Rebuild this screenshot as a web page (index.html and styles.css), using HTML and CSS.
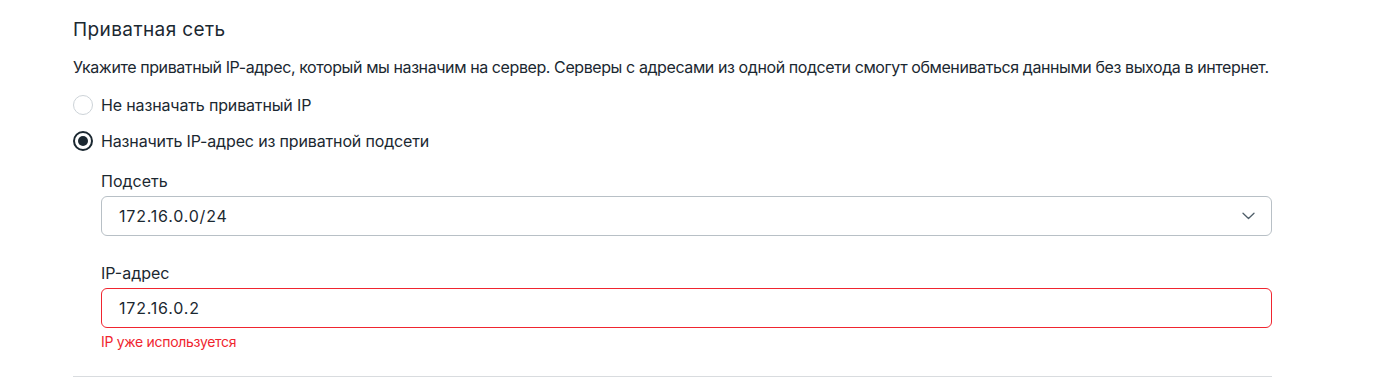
FILE: index.html
```html
<!DOCTYPE html>
<html lang="ru">
<head>
<meta charset="utf-8">
<link rel="stylesheet" href="styles.css">
</head>
<body>
<section class="section">
  <h2 class="title">Приватная сеть</h2>
  <p class="desc">Укажите приватный IP-адрес, который мы назначим на сервер. Серверы с адресами из одной подсети смогут обмениваться данными без выхода в интернет.</p>
  <div class="radios">
    <label class="radio"><span class="circle"></span><span>Не назначать приватный IP</span></label>
    <label class="radio"><span class="circle checked"></span><span>Назначить IP-адрес из приватной подсети</span></label>
  </div>
  <div class="fields">
    <div class="field">
      <div class="label">Подсеть</div>
      <div class="control select">
        <span class="value">172.16.0.0/24</span>
        <svg class="chev" width="13" height="8" viewBox="0 0 13 8"><path d="M1 1.2l5.5 5.3 5.5-5.3" fill="none" stroke="#4f5e69" stroke-width="1.3" stroke-linecap="round" stroke-linejoin="round"/></svg>
      </div>
    </div>
    <div class="field second">
      <div class="label">IP-адрес</div>
      <div class="control error"><span class="value">172.16.0.2</span></div>
      <div class="err">IP уже используется</div>
    </div>
  </div>
  <div class="divider"></div>
</section>
</body>
</html>
```
FILE: styles.css
```css
* { box-sizing: border-box; }
html, body { margin: 0; padding: 0; background: #fff; }
body { font-family: Inter, "Noto Sans", sans-serif; color: #1b2831; }
.section { margin-left: 73px; width: 1199px; padding-top: 18px; }
.title { margin: 0; font-size: 19px; line-height: 24px; font-weight: 400; letter-spacing: 0.4px; }
.desc { margin: 13px 0 0; font-size: 16px; line-height: 24px; letter-spacing: -0.41px; white-space: nowrap; }
.radios { margin-top: 14px; display: flex; flex-direction: column; gap: 12px; }
.radio { display: flex; align-items: center; gap: 8px; font-size: 16px; line-height: 24px; letter-spacing: -0.15px; }
.circle { width: 20px; height: 20px; border-radius: 50%; border: 1px solid #cdd3d8; display: flex; align-items: center; justify-content: center; }
.circle.checked { border: 2px solid #1b2831; }
.circle.checked::after { content: ""; width: 10px; height: 10px; border-radius: 50%; background: #1b2831; }
.fields { margin-left: 28px; margin-top: 17px; }
.field.second { margin-top: 26px; }
.label { font-size: 16px; line-height: 22px; margin-bottom: 4px; }
.control { height: 40px; border: 1px solid #b8c0c6; border-radius: 6px; display: flex; align-items: center; justify-content: space-between; padding: 0 16px 0 17px; font-size: 16px; }
.value { letter-spacing: 0.8px; }
.control.error { border-color: #f0252f; }
.err { color: #f0252f; font-size: 14px; line-height: 20px; margin-top: 4px; letter-spacing: -0.3px; }
.divider { margin-top: 24px; height: 1px; background: #d9dcdf; }
```
